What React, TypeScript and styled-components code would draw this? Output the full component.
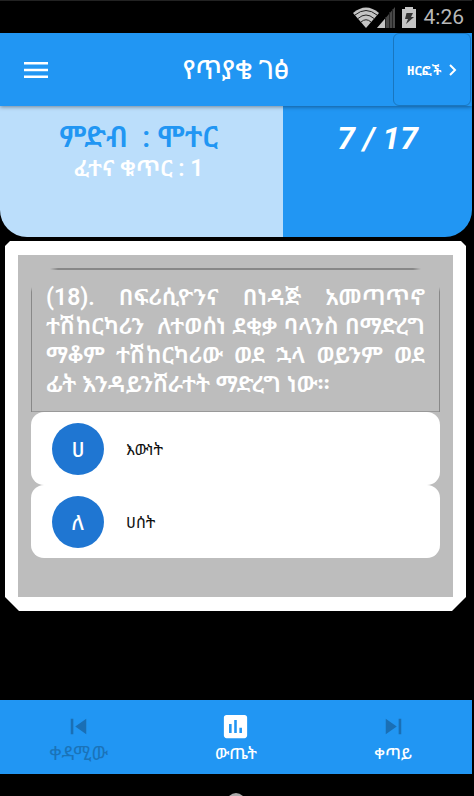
import React from "react";
import styled, { createGlobalStyle } from "styled-components";

const GlobalStyle = createGlobalStyle`
  *, *::before, *::after { box-sizing: border-box; }
  html, body { margin: 0; background: #000; }
  body { font-family: Roboto, "Noto Sans Ethiopic", "Noto Sans", sans-serif; color: #fff; }
  button { font: inherit; color: inherit; background: none; border: 0; padding: 0; margin: 0; cursor: pointer; }
  h1, h2, p { margin: 0; font-weight: 400; }
  svg { display: block; }
`;

const blue = "#2196f3";

const Screen = styled.div`
  display: flex;
  flex-direction: column;
  min-height: 100vh;
  padding-right: 2px;
  overflow: hidden;
`;

const StatusBar = styled.div`
  display: flex;
  justify-content: flex-end;
  align-items: center;
  height: 33px;
  padding: 0 8px 0 0;
  border-top: 1px solid #222;
  color: #b8b8b8;
`;

const Clock = styled.span`
  margin-left: 8px;
  font-size: 21px;
  line-height: 32px;
`;

const AppBar = styled.header`
  position: relative;
  z-index: 1;
  display: grid;
  grid-template-columns: 79px 1fr 79px;
  height: 73px;
  background: ${blue};
  box-shadow: 0 1px 4px rgba(0, 0, 0, 0.4);
`;

const MenuButton = styled.button`
  display: flex;
  align-items: center;
  padding-left: 24px;
`;

const Title = styled.h1`
  display: flex;
  align-items: center;
  justify-content: center;
  font-size: 26px;
  font-weight: 500;
  line-height: 32px;
  white-space: nowrap;
`;

const TypesButton = styled.button`
  display: flex;
  align-items: center;
  justify-content: center;
  gap: 8px;
  margin-right: 1px;
  border: 1px solid #1976bf;
  border-radius: 6px;
  font-size: 13px;
  font-weight: 700;
  white-space: nowrap;
`;

const Summary = styled.section`
  display: grid;
  grid-template-columns: 3fr 2fr;
  height: 131px;
  border-radius: 0 0 27px 27px;
  overflow: hidden;
  text-align: center;
`;

const Category = styled.div`
  padding: 14px 6px 0 0;
  background: #bbdefb;
`;

const CategoryName = styled.h2`
  color: ${blue};
  font-size: 29px;
  font-weight: 600;
  line-height: 34px;
  white-space: pre;
`;

const ExamNumber = styled.p`
  font-size: 23px;
  font-weight: 600;
  line-height: 29px;
`;

const Progress = styled.div`
  padding-top: 14px;
  background: ${blue};
  font-size: 32px;
  font-style: italic;
  font-weight: 700;
  line-height: 36px;
`;

const Card = styled.main`
  margin: 4px 6px 0 5px;
  padding: 14px 13px;
  background: #fff;
  clip-path: polygon(5px 0, calc(100% - 5px) 0, 100% 5px, 100% calc(100% - 14px), calc(100% - 14px) 100%, 14px 100%, 0 calc(100% - 14px), 0 5px);
`;

const CardBody = styled.div`
  padding: 13px 13px 39px;
  background: #bdbdbd;
`;

const Question = styled.p`
  min-height: 144px;
  padding: 15px 15px 13px;
  background:
    linear-gradient(90deg, transparent, #888 8px, #888 calc(100% - 8px), transparent) center top / calc(100% - 38px) 2px no-repeat,
    linear-gradient(transparent, #888 5px) left bottom / 1px calc(100% - 19px) no-repeat,
    linear-gradient(transparent, #888 5px) right bottom / 1px calc(100% - 19px) no-repeat,
    linear-gradient(#999, #999) center bottom / 100% 1px no-repeat;
  font-size: 23px;
  font-weight: 600;
  line-height: 29px;
  text-align: justify;
  white-space: pre-wrap;
`;

const Option = styled.button`
  display: flex;
  align-items: center;
  gap: 22px;
  width: 100%;
  height: 73px;
  padding-left: 21px;
  border-radius: 13px;
  background: #fff;
  color: #111;
  font-size: 16px;
`;

const Letter = styled.span`
  display: grid;
  place-items: center;
  width: 52px;
  height: 52px;
  border-radius: 50%;
  background: #1f76d2;
  color: #fff;
  font-size: 21px;
  font-weight: 500;
`;

const BottomNav = styled.nav`
  display: grid;
  grid-template-columns: repeat(3, 1fr);
  height: 74px;
  margin-top: auto;
  background: ${blue};
`;

const NavButton = styled.button<{ $muted?: boolean }>`
  display: flex;
  flex-direction: column;
  align-items: center;
  padding-top: 11px;
  color: ${(p) => (p.$muted ? "#1a73b9" : "#fff")};
  font-size: ${(p) => (p.$muted ? "19px" : "16px")};
  font-weight: ${(p) => (p.$muted ? 400 : 500)};
  line-height: 24px;
`;

const NavIcon = styled.svg<{ $muted?: boolean }>`
  width: 31px;
  height: 31px;
  fill: ${(p) => (p.$muted ? "#1a6fb5" : "#fff")};
`;

const SystemBar = styled.div`
  display: flex;
  justify-content: center;
  align-items: flex-end;
  height: 22px;
`;

function Wifi() {
  return (
    <svg width="26" height="21" viewBox="0 0 26 21">
      <path d="M0 6Q13-5 26 6L13 21Z" fill="#c4c4c4" />
      <path d="M2 8Q13-1 24 8M5 11.500Q13 4.500 21 11.500M8 15Q13 10.500 18 15" fill="none" stroke="#222" strokeWidth="1" />
    </svg>
  );
}

function Signal() {
  return (
    <svg width="18" height="21" viewBox="0 0 18 21">
      <path d="M18 0V21H0Z" fill="#484848" />
      <path d="M8 11.700V21H0Z" fill="#c4c4c4" />
      <path d="M8.500 10V21M12.500 5V21M15.500 2V21" stroke="#242424" />
    </svg>
  );
}

function Battery() {
  return (
    <svg width="14" height="21" viewBox="0 0 14 21">
      <path d="M3 0H11V2H14V21H0V2H3Z" fill="#c4c4c4" />
      <path d="M4.500 6H11L9 10H12L4 17L6 12H3Z" fill="#333" />
    </svg>
  );
}

const StatusIcons = styled.div`
  display: flex;
  & > :nth-child(2) { margin-left: -2px; }
  & > :last-child { margin-left: 7px; }
`;

const options = [
  { letter: "ሀ", text: "እውነት" },
  { letter: "ለ", text: "ሀሰት" },
];

export default function App() {
  return (
    <Screen lang="am">
      <GlobalStyle />
      <StatusBar>
        <StatusIcons>
          <Wifi />
          <Signal />
          <Battery />
        </StatusIcons>
        <Clock>4:26</Clock>
      </StatusBar>
      <AppBar>
        <MenuButton aria-label="ምናሌ">
          <svg width="24" height="16" viewBox="0 0 24 16" fill="#fff">
            <path d="M0 0H24V2.500H0ZM0 6.700H24V9.200H0ZM0 13.500H24V16H0Z" />
          </svg>
        </MenuButton>
        <Title>የጥያቄ ገፅ</Title>
        <TypesButton>
          ዘርፎች
          <svg width="8" height="12" viewBox="0 0 8 12" fill="none" stroke="#fff" strokeWidth="2">
            <path d="M1 1L6 6L1 11" />
          </svg>
        </TypesButton>
      </AppBar>
      <Summary>
        <Category>
          <CategoryName>{"ምድብ  : ሞተር"}</CategoryName>
          <ExamNumber>ፈተና ቁጥር : 1</ExamNumber>
        </Category>
        <Progress>7 / 17</Progress>
      </Summary>
      <Card>
        <CardBody>
          <Question>{"(18). በፍሪሲዮንና በነዳጅ አመጣጥኖ ተሽከርካሪን  ለተወሰነ ደቂቃ ባላንስ በማድረግ ማቆም ተሽከርካሪው ወደ ኋላ ወይንም ወደ ፊት እንዳይንሸራተት ማድረግ ነው።"}</Question>
          {options.map((o) => (
            <Option key={o.letter}>
              <Letter>{o.letter}</Letter>
              {o.text}
            </Option>
          ))}
        </CardBody>
      </Card>
      <BottomNav>
        <NavButton $muted disabled>
          <NavIcon $muted viewBox="0 0 24 24"><path d="M6 6h2v12H6zm3.500 6l8.500 6V6z" /></NavIcon>
          ቀዳሚው
        </NavButton>
        <NavButton>
          <NavIcon viewBox="0 0 24 24"><path d="M19 3H5c-1.100 0-2 .9-2 2v14c0 1.100.9 2 2 2h14c1.100 0 2-.9 2-2V5c0-1.100-.9-2-2-2zM9 17H7v-7h2v7zm4 0h-2V7h2v10zm4 0h-2v-4h2v4z" /></NavIcon>
          ውጤት
        </NavButton>
        <NavButton>
          <NavIcon $muted viewBox="0 0 24 24"><path d="M6 18l8.500-6L6 6v12zM16 6v12h2V6h-2z" /></NavIcon>
          ቀጣይ
        </NavButton>
      </BottomNav>
      <SystemBar>
        <svg width="14" height="3" viewBox="0 0 14 3"><path d="M0 3Q7-3 14 3Z" fill="#aaa" /></svg>
      </SystemBar>
    </Screen>
  );
}
